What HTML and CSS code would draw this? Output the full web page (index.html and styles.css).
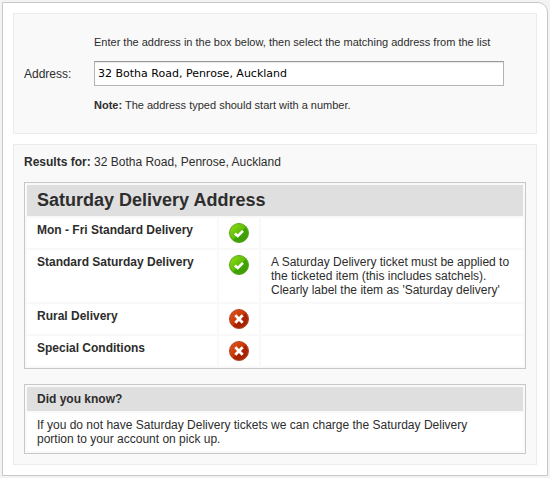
FILE: index.html
```html
<!DOCTYPE html>
<html lang="en">
<head>
<meta charset="utf-8">
<title>Saturday Delivery Address</title>
<link rel="stylesheet" href="styles.css">
</head>
<body>
<svg class="defs" aria-hidden="true">
  <defs>
    <linearGradient id="green" x1="0" y1="0" x2="1" y2="1">
      <stop offset="0.15" stop-color="#86d411"/>
      <stop offset="0.5" stop-color="#5fbd08"/>
      <stop offset="0.55" stop-color="#3fa303"/>
      <stop offset="1" stop-color="#3c9a06"/>
    </linearGradient>
    <linearGradient id="red" x1="0" y1="0" x2="1" y2="1">
      <stop offset="0.15" stop-color="#d9501a"/>
      <stop offset="0.5" stop-color="#c63605"/>
      <stop offset="0.55" stop-color="#a82200"/>
      <stop offset="1" stop-color="#a32a06"/>
    </linearGradient>
    <symbol id="yes" viewBox="0 0 20 20">
      <circle cx="10" cy="10" r="9.5" fill="url(#green)" stroke="#55a81c"/>
      <path d="M5.8 10.4 L8.8 13 L14 7.8" fill="none" stroke="#fff" stroke-width="2.6"/>
    </symbol>
    <symbol id="no" viewBox="0 0 20 20">
      <circle cx="10" cy="10" r="9.5" fill="url(#red)" stroke="#b8431f"/>
      <path d="M6.3 6.3 L13.7 13.7 M13.7 6.3 L6.3 13.7" fill="none" stroke="#fff" stroke-width="2.8"/>
    </symbol>
  </defs>
</svg>
<main class="card">
  <form class="panel search">
    <label class="search-label" for="address">Address:</label>
    <div class="search-fields">
      <p class="hint">Enter the address in the box below, then select the matching address from the list</p>
      <input class="address" id="address" type="text" value="32 Botha Road, Penrose, Auckland">
      <p class="hint"><strong>Note:</strong> The address typed should start with a number.</p>
    </div>
  </form>
  <section class="panel results">
    <p class="summary"><strong>Results for:</strong> 32 Botha Road, Penrose, Auckland</p>
    <table class="grid">
      <thead>
        <tr><th class="title" colspan="3">Saturday Delivery Address</th></tr>
      </thead>
      <tbody>
        <tr>
          <th class="service" scope="row">Mon - Fri Standard Delivery</th>
          <td class="status"><svg class="icon" role="img" aria-label="Yes"><use href="#yes"/></svg></td>
          <td></td>
        </tr>
        <tr>
          <th class="service" scope="row">Standard Saturday Delivery</th>
          <td class="status"><svg class="icon" role="img" aria-label="Yes"><use href="#yes"/></svg></td>
          <td>A Saturday Delivery ticket must be applied to the ticketed item (this includes satchels). Clearly label the item as 'Saturday delivery'</td>
        </tr>
        <tr>
          <th class="service" scope="row">Rural Delivery</th>
          <td class="status"><svg class="icon" role="img" aria-label="No"><use href="#no"/></svg></td>
          <td></td>
        </tr>
        <tr>
          <th class="service" scope="row">Special Conditions</th>
          <td class="status"><svg class="icon" role="img" aria-label="No"><use href="#no"/></svg></td>
          <td></td>
        </tr>
      </tbody>
    </table>
    <table class="grid">
      <thead>
        <tr><th>Did you know?</th></tr>
      </thead>
      <tbody>
        <tr><td class="tip">If you do not have Saturday Delivery tickets we can charge the Saturday Delivery portion to your account on pick up.</td></tr>
      </tbody>
    </table>
  </section>
</main>
</body>
</html>
```

FILE: styles.css
```css
* {
  box-sizing: border-box;
}

body {
  margin: 0;
  padding: 2px;
  background: #f3f3f3;
  color: #2d2d2d;
  font: 12px/14px "Liberation Sans", Arial, sans-serif;
}

p {
  margin: 0;
}

.defs {
  position: absolute;
  width: 0;
  height: 0;
}

.card {
  display: flex;
  flex-direction: column;
  gap: 10px;
  padding: 10px;
  background: #fff;
  border: 1px solid #c8c8c8;
  border-radius: 0 10px 0 0;
}

.panel {
  padding: 10px;
  background: #f9f9f9;
  border: 1px solid #ececec;
}

.search {
  display: flex;
  align-items: center;
  padding: 21px 32px 21px 10px;
}

.search-label {
  flex: 0 0 70px;
}

.search-fields {
  display: flex;
  flex: 1;
  flex-direction: column;
  gap: 12px;
  min-width: 0;
}

.hint {
  font-size: 11px;
}

.address {
  width: 100%;
  height: 25px;
  padding: 0 3px;
  background: #fff;
  border: 1px solid #b4b4b4;
  border-top-color: #999;
  border-radius: 0;
  box-shadow: inset 0 1px 1px #e8e8e8;
  color: #000;
  font: 11px "DejaVu Sans", "Lucida Grande", sans-serif;
}

.results {
  display: flex;
  flex-direction: column;
  gap: 15px;
}

.summary {
  margin-bottom: -2px;
}

.grid {
  width: 100%;
  border: 1px solid #c8c8c8;
  border-collapse: separate;
  border-spacing: 2px;
}

.grid th,
.grid td {
  padding: 5px 10px;
  text-align: left;
  vertical-align: top;
}

.grid td,
.grid .service {
  background: #fff;
}

.grid thead th {
  background: #dfdfdf;
}

.grid .title {
  font-size: 18px;
  line-height: 21px;
}

.grid .tip {
  padding-right: 30px;
}

.service {
  width: 190px;
}

.status {
  width: 40px;
}

.icon {
  display: block;
  width: 20px;
  height: 20px;
}
```
